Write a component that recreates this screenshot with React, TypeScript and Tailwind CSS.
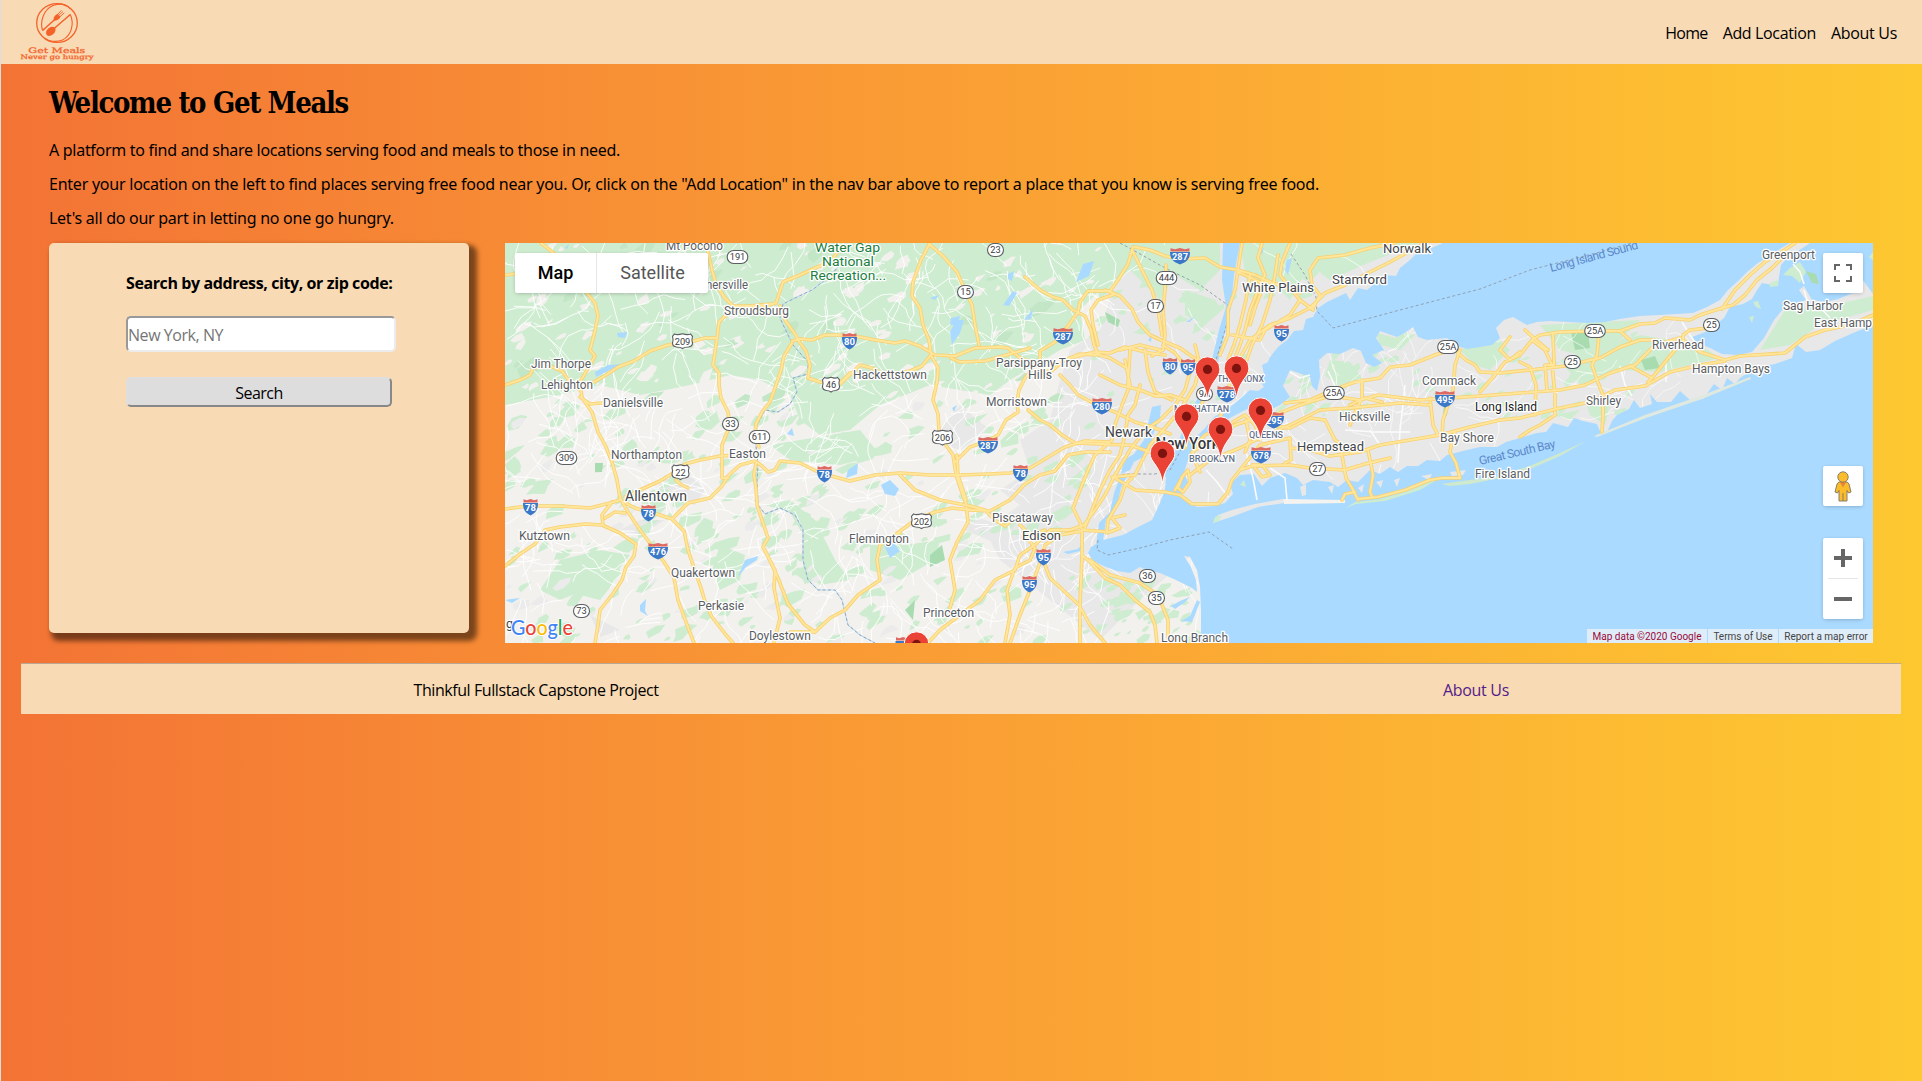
import React from "react";

type Pt = [number, number];

/* ---------- deterministic terrain texture ---------- */
function rng(seed: number) {
  let s = seed;
  return () => {
    s = (s * 1664525 + 1013904223) % 4294967296;
    return s / 4294967296;
  };
}

function minorRoads(seed: number, n: number, x0: number, y0: number, x1: number, y1: number): string {
  const r = rng(seed);
  let d = "";
  for (let i = 0; i < n; i++) {
    let x = x0 + r() * (x1 - x0);
    let y = y0 + r() * (y1 - y0);
    let a = r() * Math.PI * 2;
    d += `M${x.toFixed(1)} ${y.toFixed(1)}`;
    const k = 3 + Math.floor(r() * 5);
    for (let j = 0; j < k; j++) {
      a += (r() - 0.5) * 1.3;
      const l = 6 + r() * 9;
      x += Math.cos(a) * l;
      y += Math.sin(a) * l;
      d += `L${x.toFixed(1)} ${y.toFixed(1)}`;
    }
  }
  return d;
}

function patches(seed: number, n: number, x0: number, y0: number, x1: number, y1: number, size: number): string {
  const r = rng(seed);
  let d = "";
  for (let i = 0; i < n; i++) {
    const cx = x0 + r() * (x1 - x0);
    const cy = y0 + r() * (y1 - y0);
    const s = size * (0.35 + r());
    const k = 5 + Math.floor(r() * 4);
    for (let j = 0; j < k; j++) {
      const t = (j / k) * Math.PI * 2;
      const m = s * (0.4 + r() * 0.8);
      const u = Math.cos(t) * m * 1.5;
      const v = Math.sin(t) * m * 0.7;
      const x = cx + u * 0.87 + v * 0.5;
      const y = cy - u * 0.5 + v * 0.87;
      d += `${j ? "L" : "M"}${x.toFixed(1)} ${y.toFixed(1)}`;
    }
    d += "Z";
  }
  return d;
}

const OCEAN =
  "M1443 243L1427 250 1418 252 1410 260 1400 268 1396 276 1385 275 1367 290 1358 288 1350 300 1346 293 1327 302 1318 308 1313 317 1306 319 1303 330 1294 331 1287 340 1278 347 1270 357 1268 362 1262 365 1264 374 1257 377 1264 387 1258 391 1250 390 1240 399 1228 409 1214 417 1205 428 1195 438 1187 434 1180 441 1176 450 1166 458 1160 466 1166 478 1165 490 1160 503 1152 520 1138 527 1123 535 1103 540 1091 547 1088 553 1093 561 1106 567 1117 571 1130 573 1140 567 1150 571 1160 573 1176 580 1192 588 1197 592 1196 580 1191 567 1184 556 1190 557 1197 570 1200 587 1201 610 1201 643 1873 643 1873 243Z" +
  "M1195 443L1206 433 1228 419 1245 410 1262 405 1268 411 1280 405 1290 397 1283 386 1290 370 1310 377 1312 386 1317 391 1320 377 1319 360 1327 353 1340 354 1353 348 1361 351 1366 363 1374 367 1382 363 1372 355 1384 350 1376 338 1380 331 1397 337 1403 334 1413 327 1418 337 1427 340 1447 338 1457 346 1467 349 1480 347 1492 345 1500 338 1496 328 1504 320 1513 317 1527 325 1537 322 1550 321 1587 323 1605 322 1620 319 1640 316 1660 315 1693 313 1707 307 1720 300 1728 290 1738 281 1747 272 1758 263 1770 256 1780 249 1790 243 1810 243 1801 249 1788 257 1781 265 1779 277 1778 286 1762 283 1757 290 1752 299 1743 304 1730 307 1724 318 1708 331 1692 337 1697 343 1710 348 1722 354 1738 355 1752 352 1764 338 1774 320 1783 309 1800 302 1806 300 1799 290 1804 286 1812 300 1826 302 1838 299 1853 293 1862 279 1868 287 1873 294 1873 325 1853 333 1835 341 1820 350 1806 352 1796 344 1792 358 1775 364 1760 367 1757 376 1749 372 1740 378 1735 384 1727 378 1722 390 1714 384 1703 399 1690 400 1680 391 1671 402 1657 402 1650 394 1652 404 1640 408 1634 400 1629 409 1617 415 1612 421 1607 432 1600 431 1597 424 1583 421 1574 418 1568 427 1553 423 1546 432 1537 433 1520 438 1506 442 1497 447 1480 447 1467 450 1447 455 1440 461 1427 460 1418 466 1407 466 1398 472 1390 467 1380 474 1370 470 1358 482 1347 480 1338 487 1330 482 1313 480 1303 485 1297 478 1285 473 1270 478 1262 486 1254 474 1240 475 1230 484 1233 494 1225 503 1214 506 1197 507 1188 502 1180 497 1183 489 1188 482 1184 473 1187 463 1191 452Z";

const INLETS: string[] = [
  "M1223 243L1240 243 1234 275 1231 307 1222 345 1216 371 1204 398 1193 420 1187 440 1181 446 1179 440 1187 420 1199 395 1210 368 1219 330 1226 307 1222 280Z",
  "M1152 407L1161 405 1160 418 1154 432 1150 447 1143 457 1134 462 1130 470 1121 474 1124 460 1134 454 1144 440 1148 424Z",
  "M1121 474L1128 474 1121 488 1117 505 1106 520 1103 541 1096 545 1099 523 1110 512 1114 493Z",
  "M505 600L520 598 512 603Z",
  "M595 372L608 365 622 364 606 372 596 377Z",
  "M617 333L627 332 625 338 618 337Z",
  "M882 541L892 541 900 551 890 558Z",
  "M881 485L890 480 899 489 895 496 885 494Z",
  "M848 470L858 463 857 474 846 478Z",
  "M950 332L956 320 964 320 960 333 952 345Z",
  "M951 318L960 316 958 324 950 325Z",
  "M1076 282L1083 264 1094 261 1089 276Z",
  "M1003 305L1013 291 1017 293 1009 306Z",
  "M1008 274L1014 271 1012 281 1008 279Z",
  "M1024 320L1033 309 1031 319Z",
  "M930 298L939 295 935 300Z",
  "M738 577L745 560 758 556 757 560 746 567Z",
  "M640 605L646 599 645 611 648 616 640 611Z",
  "M787 434L792 428 794 436Z",
  "M565 248L569 244 567 249Z",
  "M1063 552L1078 549 1085 541 1080 551 1068 554Z",
  "M1171 606L1180 601 1190 597 1185 602 1175 609Z",
  "M1181 621L1190 616 1197 600 1200 602 1192 622Z",
  "M1287 260L1292 258 1288 275 1285 270Z",
  "M1258 253L1264 248 1262 254Z",
  "M1186 322L1195 316 1190 322Z",
  "M952 408L957 405 954 412Z",
  "M1148 340L1152 335 1151 342Z",
  "M1268 480L1280 478 1276 490 1266 492Z",
  "M1240 483L1252 480 1258 492 1244 496Z",
  "M1305 484L1315 482 1312 492Z",
];

const ISLANDS: { d: string; fill: string }[] = [
  { d: "M1213 523L1218 515 1232 510 1255 504 1283 499 1284 503 1258 507 1234 516Z", fill: "#e8e8e8" },
  { d: "M1213 523L1215 517 1222 515 1219 521Z", fill: "#ceecd0" },
  { d: "M1283 499L1345 500 1345 503 1284 504Z", fill: "#f5f3f0" },
  { d: "M1346 508L1355 502 1380 499 1405 492 1440 478 1420 490 1385 501 1356 504Z", fill: "#ceecd0" },
  { d: "M1441 484L1470 480 1500 476 1532 465 1560 453 1588 440 1593 437 1560 456 1530 469 1500 478 1470 484 1450 486Z", fill: "#cfe9cd" },
  { d: "M1594 436L1645 415 1700 396 1750 377 1751 379 1702 399 1646 418 1597 437Z", fill: "#dfe9e0" },
  { d: "M1783 275L1790 268 1800 262 1806 272 1800 283 1792 276Z", fill: "#ceecd0" },
  { d: "M1806 271L1816 274 1819 284 1812 283Z", fill: "#a8dcb0" },
  { d: "M1749 317L1754 316 1752 323Z", fill: "#ceecd0" },
  { d: "M1753 302L1758 301 1761 309 1756 307Z", fill: "#ceecd0" },
  { d: "M1770 283L1778 280 1778 286 1770 287Z", fill: "#ceecd0" },
  { d: "M1869 257L1873 252 1873 260Z", fill: "#ceecd0" },
  { d: "M1300 487L1306 484 1306 495 1302 496Z", fill: "#e8e8e8" },
  { d: "M1328 487L1334 485 1332 494Z", fill: "#e8e8e8" },
  { d: "M1358 488L1364 484 1362 493Z", fill: "#e8e8e8" },
  { d: "M1376 482L1383 480 1381 488Z", fill: "#e8e8e8" },
  { d: "M1394 480L1400 478 1397 487Z", fill: "#e8e8e8" },
  { d: "M1421 476L1432 474 1429 480Z", fill: "#e8e8e8" },
  { d: "M1450 472L1466 470 1463 475 1452 476Z", fill: "#e8e8e8" },
  { d: "M1240 485L1244 480 1246 487Z", fill: "#ceecd0" },
];

const HIGHWAYS: string[] = [
  "M541 243L556 255 568 272 583 288 595 303 598 316 594 335 590 350 595 356 587 370 580 382 582 398 592 412 598 432 606 447 612 462 617 480 620 498 628 512 640 530 652 546 664 562 674 578 678 600 686 622 694 643",
  "M505 275L515 274 525 278 540 280",
  "M505 385L520 380 530 375 533 368 548 365 562 371 570 382 580 390",
  "M594 382L606 375 618 367 634 361 650 351 668 345 690 342 705 338 717 338 719 322 725 316 740 307 770 304",
  "M580 397L590 404 602 403",
  "M706 243L712 270 716 284 724 297 733 306 765 306 776 303 783 282 800 275 815 268 830 262 840 249",
  "M780 306L785 320 795 334 800 343 806 351 810 365 808 378 820 382 840 383 850 373",
  "M717 338L715 352 713 365 719 373 719 385 721 398 728 412 730 425 722 445 722 465",
  "M792 341L800 339 812 340 825 335 838 335 860 337 875 340 895 343 905 341 920 346 935 355 955 356 975 348 1000 347 1008 348 1020 358 1035 363",
  "M792 343L784 356 781 370 775 388 770 402 762 412 756 424 755 436 759 447",
  "M840 384L853 372 860 365 872 368 885 375 910 371 922 366 930 356",
  "M930 243L921 260 913 282 912 296 920 308 923 325 929 340 931 355 938 368 937 382 933 400 938 414 939 430 945 444 953 455 956 475 961 490 966 504 968 522 957 542 950 560 955 590 950 608",
  "M929 244L943 256 957 272 965 290 972 305 975 325 979 345",
  "M951 358L960 362 985 361 1010 354 1030 348",
  "M1025 277L1040 290 1053 297 1063 300 1073 310 1085 316 1091 330 1094 345 1098 354",
  "M1133 247L1128 264 1118 280 1110 291 1088 291 1080 302 1078 312 1068 326 1055 342 1040 351 1040 362 1033 368 1025 378 1019 390 1017 402 1018 412 1006 420 998 435 985 442 970 447 955 462",
  "M1110 291L1115 294 1098 300 1091 310 1093 325 1098 345",
  "M1105 290L1120 296 1132 309 1138 322 1150 335 1163 341 1180 348 1200 362",
  "M1135 247L1150 250 1165 256 1180 259 1205 258 1220 267 1238 270 1255 275 1275 284 1295 290",
  "M1132 250L1142 270 1152 290 1158 310 1162 335",
  "M1166 265L1165 290 1163 310 1165 335 1163 350 1152 356",
  "M505 509L520 507 535 506 560 506 590 508 610 503 620 500 635 508 648 512 660 515 672 519 688 503 710 498 722 486 728 476 740 465 755 461 762 466 768 472 775 470 780 461 800 463 820 473 850 481 875 475 900 473 930 475 960 475 990 474 1010 473 1030 468 1045 459 1065 447 1085 441 1110 442",
  "M505 566L520 554 535 544 545 530 560 527 585 524 602 525 620 533 636 544 634 556 626 567 622 580 612 595 600 610 598 625 595 643",
  "M612 502L602 515 603 525M605 518L615 512 625 513",
  "M722 462L722 478 728 478M625 497L640 490 660 481 670 475 685 464 700 460 720 456 740 455",
  "M676 480L680 484 688 488",
  "M672 519L684 531 688 550 694 568 701 588 706 605 712 617 726 635 733 643",
  "M756 463L754 475 756 488 757 505 762 520 768 538 763 547 775 570 774 588 780 618 774 643",
  "M765 550L778 578 788 604 805 625 815 632",
  "M815 632L830 618 845 610 858 595 880 580 877 560 880 545 900 533",
  "M815 632L790 632",
  "M900 475L915 490 940 500 955 503 970 506 985 510 995 520 1005 526 1015 518",
  "M895 535L915 520 935 512 952 508 970 510 990 511 1010 500 1025 484 1040 475 1055 471 1068 455 1085 452 1110 452",
  "M957 455L958 475 966 500",
  "M1060 375L1070 385 1078 395 1095 404 1115 412 1135 422 1155 428 1170 434",
  "M1028 410L1040 420 1050 425 1062 435 1075 443 1100 444 1130 445 1150 452",
  "M1125 360L1130 385 1122 405 1115 425 1112 440 1095 455 1088 470 1080 490 1073 508 1080 522 1082 530",
  "M1140 385L1135 405 1128 415 1125 435 1120 455 1110 470 1100 490 1092 510 1084 530",
  "M1163 345L1175 353 1190 372 1185 390 1175 405 1160 420 1145 430 1130 450 1115 475 1105 495 1095 510 1084 525 1070 530 1050 530 1035 545 1020 555 1015 570 995 580 980 600 960 615 940 630 928 643",
  "M1100 375L1120 385 1140 390 1155 396 1170 395 1185 400M1096 354L1110 358 1125 367M1096 355L1080 354 1065 360 1050 372 1040 370",
  "M1195 345L1200 365 1195 385 1180 410 1165 428 1150 445 1135 475 1112 477",
  "M1115 478L1135 490 1165 492 1180 495 1192 504 1218 504 1228 492 1232 480 1240 470 1252 466 1290 465 1310 468 1345 470 1365 464 1390 458",
  "M1082 530L1082 555 1090 562 1105 578 1120 585 1135 600 1150 612 1155 625 1157 643",
  "M1082 555L1081 580 1080 605 1080 643",
  "M1090 560L1110 575 1140 583 1158 595 1168 620 1168 643",
  "M1080 607L1090 625 1105 643M1043 560L1050 578 1065 592 1080 606",
  "M1082 531L1060 535 1045 545 1041 560 1030 590 1020 615 1010 643",
  "M1025 535L1035 548 1030 560 1015 568 1007 590 1010 615 1005 643M1020 525L1030 535 1045 530",
  "M1082 530L1110 532 1120 528 1112 518 1125 515M1107 533L1108 520 1120 500 1125 485 1132 478",
  "M1240 358L1250 340 1270 325 1290 318 1310 308 1325 293 1345 285 1370 272 1390 262 1410 251 1425 243",
  "M1313 308L1320 295 1312 285 1310 270 1318 258 1345 255 1370 248 1395 243",
  "M1313 310L1300 300 1290 288 1280 275 1282 262 1290 243",
  "M1242 243L1238 270 1235 290 1228 310 1228 335 1220 355",
  "M1262 243L1258 258 1265 275 1258 290 1250 310 1245 330 1240 345 1235 358 1232 375 1225 400",
  "M1278 255L1275 275 1270 300 1262 325 1252 345 1245 365 1250 380",
  "M1250 275L1246 300 1240 325 1234 345 1228 360M1266 280L1256 305 1250 325",
  "M1238 272L1260 282 1283 284 1300 293M1232 335L1260 340 1265 330 1290 315 1300 300",
  "M1215 360L1210 385 1200 408 1190 430 1185 448",
  "M1222 412L1215 430 1205 435 1198 442 1192 455 1200 472",
  "M1192 452L1215 438 1235 425 1250 420 1275 415 1300 405 1330 396 1360 400 1378 395 1395 397 1420 400 1450 398 1480 396 1520 393 1560 390 1585 385 1610 373 1635 365 1655 345 1680 338",
  "M1190 475L1210 460 1240 448 1260 438 1290 425 1320 410 1350 408 1400 403 1430 405",
  "M1285 403L1310 400 1333 390 1355 382 1380 378 1390 367 1410 365 1435 355 1455 348",
  "M1270 425L1290 428 1310 418 1325 420 1335 440 1350 450",
  "M1240 470L1260 445 1290 438 1291 460 1285 463",
  "M1291 448L1310 450 1330 456 1360 452 1380 445 1410 440 1440 435 1470 427 1500 420 1520 418 1560 408 1590 402 1615 390 1645 386 1670 372 1700 365 1725 361",
  "M1341 450L1346 478 1352 488 1358 500M1368 450L1373 475 1370 492 1372 497",
  "M1342 500L1345 494 1355 492M1358 499L1378 497 1405 490 1430 480 1442 478 1460 478",
  "M1460 478L1456 463 1450 452 1452 440 1455 432",
  "M1233 422L1245 415 1255 425 1260 440M1246 420L1250 440 1245 452",
  "M1362 380L1362 398 1355 412 1350 425M1350 405L1365 398 1382 402",
  "M1460 350L1455 365 1453 390 1443 420 1442 438M1430 398L1433 425 1438 435",
  "M1455 350L1466 360 1475 365 1480 372 1500 373 1530 370 1565 366 1600 358 1620 347 1640 340 1655 340",
  "M1480 392L1495 375 1505 362 1520 355 1532 340 1540 335 1560 332 1595 331 1620 331 1640 324 1655 323 1665 318 1690 320 1700 315 1722 308 1733 305",
  "M1620 331L1630 340M1510 337L1500 350 1510 360 1520 352M1532 340L1545 350 1552 365 1555 395 1555 415 1540 425 1530 430 1520 437",
  "M1553 333L1554 365 1545 365 1547 390M1525 330L1536 340 1548 350M1520 362L1530 367 1536 385 1535 415",
  "M1599 335L1597 355 1592 365 1597 380 1603 395 1603 415 1602 432",
  "M1630 366L1652 378 1665 362 1675 350M1652 378L1648 382",
  "M1722 309L1735 290 1750 275 1765 262 1780 253 1795 243M1733 305L1745 295 1757 280 1772 268 1785 255",
  "M1683 340L1683 335 1690 330 1708 328M1683 340L1700 352 1725 360 1740 356 1755 355 1785 353 1795 345 1805 337 1825 330 1850 325 1873 315",
  "M1182 478L1175 490M1188 470L1182 477 1178 488 1183 492 1190 482Z",
  "M1252 465L1262 465 1270 475 1262 477 1255 468",
  "M1120 350L1140 345 1160 350M1130 350L1128 385M1145 350L1148 372 1155 392 1172 400",
  "M1075 357L1095 352 1110 353 1125 347 1150 353 1165 355",
];

const ROUTE_THIN: string[] = [
  "M1206 470L1217 482 1228 497M1246 452L1253 478 1257 500M1270 468L1285 478 1287 500",
  "M1682 322L1690 335 1697 345M1620 366L1625 385 1632 396M1666 360L1666 382",
  "M1793 264L1800 272 1804 284M1804 290L1808 303M1818 305L1830 318",
  "M1310 375L1300 378 1290 372M1328 371L1335 386",
  "M1405 385L1403 405 1400 430 1398 463M1370 430L1380 445M1345 430L1375 432 1410 432",
];

const BORDERS: string[] = [
  "M1291 254L1305 275 1316 297 1317 311 1333 328 1400 310 1480 289 1530 270 1600 252 1632 243",
  "M1120 243L1133 250 1165 268 1200 285 1229 306 1228 320 1216 360",
  "M1118 479L1124 474 1155 474 1170 470 1181 450",
  "M1098 540L1097 550 1108 555 1140 548 1170 540 1209 532 1233 549",
];
const DELAWARE =
  "M840 265L828 278 812 290 795 298 783 304 780 318 788 335 793 345 808 362 808 374 793 378 797 392 790 404 778 412 765 410 757 425 755 437 758 465 757 480 758 505 765 514 780 508 795 515 803 530 803 560 808 580 818 590 835 590 842 600 848 625 860 635 875 643";

type Label = [string, number, number, number, number, string];
const C1 = "#5a5d62";
const C2 = "#434649";
const LABELS: Label[] = [
  ["Mt Pocono", 666, 250, 57, 12, C1],
  ["nersville", 706, 289, 42, 12, C1],
  ["Stroudsburg", 724, 315, 65, 12, C1],
  ["Water Gap", 815, 252, 65, 13.5, "#1b7e40"],
  ["National", 822, 266, 52, 13.5, "#1b7e40"],
  ["Recreation...", 810, 280, 76, 13.5, "#1b7e40"],
  ["Jim Thorpe", 531, 368, 60, 12, C1],
  ["Lehighton", 541, 389, 52, 12, C1],
  ["Danielsville", 603, 407, 60, 12, C1],
  ["Northampton", 611, 459, 71, 12, C1],
  ["Easton", 729, 458, 37, 12, C1],
  ["Allentown", 625, 501, 62, 14, C2],
  ["Kutztown", 519, 540, 51, 12, C1],
  ["Quakertown", 671, 577, 64, 12, C1],
  ["Perkasie", 698, 610, 46, 12, C1],
  ["Doylestown", 749, 640, 62, 12, C1],
  ["g", 506, 628, 7, 13, C2],
  ["Hackettstown", 853, 379, 74, 12, C1],
  ["Parsippany-Troy", 996, 367, 86, 12, C1],
  ["Hills", 1028, 379, 24, 12, C1],
  ["Morristown", 986, 406, 61, 12, C1],
  ["Newark", 1105, 437, 47, 14, C2],
  ["Piscataway", 992, 522, 61, 12, C1],
  ["Edison", 1022, 540, 39, 13, C2],
  ["Flemington", 849, 543, 60, 12, C1],
  ["Princeton", 923, 617, 51, 12, C1],
  ["Long Branch", 1161, 642, 67, 12, C1],
  ["White Plains", 1242, 292, 72, 13, C2],
  ["Stamford", 1332, 283.5, 55, 13, C2],
  ["Norwalk", 1383, 252.5, 48, 13, C2],
  ["Hempstead", 1297, 450.5, 67, 13, C2],
  ["Hicksville", 1339, 420.5, 51, 12, C1],
  ["Commack", 1422, 384.5, 54, 12, C1],
  ["Long Island", 1475, 410.5, 62, 12, "#202124"],
  ["Bay Shore", 1440, 441.5, 54, 12, C1],
  ["Fire Island", 1475, 478, 55, 12, C1],
  ["Shirley", 1586, 404.5, 35, 12, C1],
  ["Riverhead", 1652, 348.5, 52, 12, C1],
  ["Hampton Bays", 1692, 372.5, 78, 12, C1],
  ["Greenport", 1762, 258.5, 53, 12, C1],
  ["Sag Harbor", 1783, 309.5, 60, 12, C1],
  ["East Hamp", 1814, 326.5, 58, 12, C1],
];
const BOROUGHS: [string, number, number, number][] = [
  ["THE BRONX", 1217, 382, 47],
  ["MANHATTAN", 1174, 412, 55],
  ["QUEENS", 1249, 438, 34],
  ["BROOKLYN", 1189, 462, 46],
];

type Shield = [string, number, number];
const INTERSTATES: Shield[] = [
  ["80", 849.5, 341], ["287", 1063, 336], ["280", 1102, 406], ["287", 988, 445], ["80", 1170, 366],
  ["95", 1188, 367], ["287", 1180, 256], ["78", 530.5, 507], ["78", 648.5, 513], ["78", 824.5, 474],
  ["476", 658, 551], ["78", 1020.5, 473], ["95", 1043.5, 557], ["95", 1029.5, 584], ["95", 1281.5, 333],
  ["278", 1227, 394], ["295", 1274, 420], ["678", 1261, 455], ["495", 1445, 399], ["", 903, 645],
];
const STATES: Shield[] = [
  ["191", 737.5, 257], ["33", 730.5, 424], ["611", 759.5, 437], ["309", 566.5, 458], ["73", 581.5, 611],
  ["23", 995.5, 250], ["15", 965.5, 292], ["444", 1166.5, 278], ["17", 1155.5, 306], ["36", 1147.5, 576],
  ["35", 1156.5, 598], ["9A", 1204.5, 394], ["27", 1317.5, 469], ["25A", 1334, 393], ["25A", 1448, 347],
  ["25A", 1595, 331], ["25", 1711.5, 325], ["25", 1572.5, 362],
];
const US_ROUTES: Shield[] = [
  ["209", 682.5, 341], ["46", 831, 384.5], ["22", 680.5, 472], ["206", 942.5, 437.5], ["202", 921.5, 521],
];
const MARKERS: Pt[] = [[1207.5, 398], [1236.5, 397], [1260.5, 439], [1186.5, 445], [1220.5, 458], [1162.5, 482], [916.5, 673]];

function Interstate({ s }: { s: Shield }) {
  const [t, x, y] = s;
  const w = t.length > 2 ? 10 : 7.5;
  return (
    <g transform={`translate(${x} ${y})`}>
      <path d={`M${-w} -4 C${-w} 3.2 ${-w * 0.65} 6 0 8.4 C${w * 0.65} 6 ${w} 3.2 ${w} -4Z`} fill="#3b78c8" />
      <path d={`M${-w + 0.5} -4.6 L${-w + 0.5} -7.8 L${-w * 0.5} -6.8 L0 -8 L${w * 0.5} -6.8 L${w - 0.5} -7.8 L${w - 0.5} -4.6Z`} fill="#dd6a62" />
      {t && <text y="4.1" textAnchor="middle" fontSize={t.length > 2 ? 9.2 : 9.6} fontWeight="700" fill="#fff">{t}</text>}
    </g>
  );
}
function StateRoute({ s }: { s: Shield }) {
  const [t, x, y] = s;
  const w = t.length > 2 ? 10.3 : 8;
  return (
    <g transform={`translate(${x} ${y})`}>
      <rect x={-w} y="-6.5" width={w * 2} height="13" rx="6.5" fill="#fff" stroke="#5b5e62" strokeWidth="1.1" />
      <text y="3.2" textAnchor="middle" fontSize="9.3" fill="#3c4043">{t}</text>
    </g>
  );
}
function USRoute({ s }: { s: Shield }) {
  const [t, x, y] = s;
  const w = t.length > 2 ? 10 : 8.5;
  return (
    <g transform={`translate(${x} ${y})`}>
      <path
        d={`M${-w + 2} -7 Q${-w * 0.5} -5.6 0 -7.2 Q${w * 0.5} -5.6 ${w - 2} -7 L${w} -4.6 Q${w - 1.2} -1 ${w} 2 Q${w} 5.5 ${w - 4} 6 Q2 6 0 7.5 Q-2 6 ${-w + 4} 6 Q${-w} 5.5 ${-w} 2 Q${-w + 1.2} -1 ${-w} -4.6Z`}
        fill="#fff" stroke="#5b5e62" strokeWidth="1.1"
      />
      <text y="3.6" textAnchor="middle" fontSize="9.3" fill="#3c4043">{t}</text>
    </g>
  );
}

function MapCanvas() {
  const hw = HIGHWAYS.join("");
  return (
    <svg className="block h-[400px] w-[1368px] font-['Roboto',sans-serif]" viewBox="505 243 1368 400">
      <rect x="505" y="243" width="1368" height="400" fill="#f2f1ee" />
      {/* built-up areas */}
      <path d="M1060 243L1450 243 1873 243 1873 480 1220 530 1140 600 1100 640 1050 600 1000 560 985 530 1020 505 1000 490 1030 470 1020 440 1050 420 1060 380 1070 350 1100 330 1110 300Z" fill="#e8e8e8" />
      <path d="M664 475L690 475 705 490 695 505 680 500 655 495ZM640 520L665 520 640 535 620 530ZM590 615L620 630 600 637ZM960 405L990 430 960 450 930 440ZM970 515L1000 525 1000 545 965 530Z" fill="#e8e8e8" />
      {/* woodland */}
      <path d="M505 243L1060 243 1120 243 1110 280 1080 310 1085 340 1060 350 1010 380 990 395 930 385 880 405 850 430 820 435 800 420 790 395 760 380 730 375 690 385 640 395 600 385 560 395 505 405Z" fill="#ceecd0" />
      <path d="M1085 243L1220 243 1220 270 1200 290 1175 275 1160 300 1130 270 1100 300ZM1240 243L1420 243 1370 262 1330 280 1310 265 1290 300 1270 280 1250 300ZM1185 290L1215 300 1222 310 1205 325 1185 315Z" fill="#ceecd0" />
      <path d="M765 505L790 512 803 535 803 570 820 585 850 580 835 560 815 520 790 500ZM560 560L600 550 630 555 610 580 560 600 540 590ZM870 545L905 545 940 540 935 560 900 580 870 570ZM770 445L860 430 880 455 840 465 790 460ZM720 545L745 555 740 580 720 590 712 570ZM590 570L620 575 600 600 580 595Z" fill="#ceecd0" />
      <path d="M1330 360L1350 362 1362 378 1340 385 1325 376ZM1376 333L1396 338 1405 332 1415 335 1400 350 1380 345ZM1460 350L1500 340 1510 350 1490 370 1475 365ZM1540 325L1640 320 1600 360 1560 350ZM1560 360L1640 335 1700 345 1720 358 1660 372 1620 370 1580 385ZM1785 310L1830 306 1873 296 1873 310 1820 325 1790 345 1760 350ZM1585 400L1610 405 1605 425 1590 415ZM1553 415L1580 410 1570 420Z" fill="#ceecd0" />
      <path d={patches(31, 130, 505, 243, 1100, 400, 6)} fill="#f2f1ee" />
      <path d={patches(5, 270, 505, 400, 1090, 643, 8)} fill="#ceecd0" />
      <path d={patches(77, 55, 505, 400, 1020, 643, 6)} fill="#ebebeb" />
      <path d={patches(12, 60, 1080, 243, 1330, 410, 6)} fill="#ceecd0" />
      <path d={patches(15, 45, 1100, 580, 1200, 643, 6)} fill="#ceecd0" />
      <path d={patches(19, 70, 1290, 330, 1640, 420, 5)} fill="#ceecd0" />
      <path d={patches(41, 30, 505, 243, 1080, 400, 9)} fill="#c3e7c6" />
      <path d="M1571 332L1588 333 1590 348 1575 350ZM1641 360L1655 356 1660 368 1645 370ZM930 555L942 545 945 560 930 567ZM905 610L915 600 913 620ZM1444 405L1448 405 1447 416 1443 414ZM1105 312L1120 320 1118 327 1108 322ZM595 463L603 463 602 472 595 472Z" fill="#a8dcb0" />
      {/* local roads */}
      <g fill="none" stroke="#fff" strokeLinejoin="round" strokeWidth="1">
        <path d={minorRoads(3, 280, 505, 243, 860, 643)} opacity="0.9" />
        <path d={minorRoads(9, 230, 850, 243, 1110, 643)} opacity="0.9" />
        <path d={minorRoads(21, 70, 1100, 243, 1460, 600)} opacity="0.75" />
        <path d={minorRoads(23, 50, 1300, 330, 1700, 420)} opacity="0.6" />
      </g>
      <path d={OCEAN} fill="#aadaff" fillRule="evenodd" />
      <path d={INLETS.join("")} fill="#aadaff" />
      {ISLANDS.map((i) => (
        <path key={i.d} d={i.d} fill={i.fill} />
      ))}
      <path d={ROUTE_THIN.join("")} fill="none" stroke="#fbfbfb" strokeWidth="1.6" />
      <path d={BORDERS.join("")} fill="none" stroke="#8f9aa6" strokeWidth="0.9" strokeDasharray="3 2.4" />
      <path d={DELAWARE} fill="none" stroke="#b9dcf5" strokeWidth="1.1" />
      <path d={DELAWARE} fill="none" stroke="#8f9aa6" strokeWidth="0.8" strokeDasharray="3 2.4" />
      <g fill="none" strokeLinejoin="round" strokeLinecap="round">
        <path d={hw} stroke="#f9d070" strokeWidth="3.6" />
        <path d={hw} stroke="#ffe69a" strokeWidth="1.9" />
      </g>
      {INTERSTATES.map((s, i) => <Interstate key={i} s={s} />)}
      {STATES.map((s, i) => <StateRoute key={i} s={s} />)}
      {US_ROUTES.map((s, i) => <USRoute key={i} s={s} />)}
      <g stroke="#fff" strokeWidth="2.6" strokeLinejoin="round" paintOrder="stroke">
        {LABELS.map(([t, x, y, w, size, fill]) => (
          <text key={t} x={x} y={y} fontSize={size} fill={fill} textLength={w} lengthAdjust="spacingAndGlyphs">{t}</text>
        ))}
        {BOROUGHS.map(([t, x, y, w]) => (
          <text key={t} x={x} y={y} fontSize="9.5" fontWeight="500" fill="#65728a" textLength={w} lengthAdjust="spacingAndGlyphs">{t}</text>
        ))}
        <text x="1155.5" y="448.5" fontSize="17" fontWeight="500" fill="#36383b" textLength="64" lengthAdjust="spacingAndGlyphs">New York</text>
      </g>
      <g fill="#5c88c9" fontSize="12">
        <text transform="translate(1551 272) rotate(-15)" textLength="91">Long Island Sound</text>
        <text transform="translate(1480 465) rotate(-13)" textLength="78">Great South Bay</text>
      </g>
      {MARKERS.map(([x, y]) => (
        <g key={x} transform={`translate(${x} ${y})`}>
          <path d="M0 1.5C-1.2 -7 -3.5 -12 -7 -17C-10 -21.300 -12.400 -24 -12.400 -28.800A12.400 12.400 0 0 1 12.400 -28.800C12.400 -24 10 -21.300 7 -17C3.500 -12 1.200 -7 0 1.500Z" fill="#ea4335" stroke="#fff" strokeWidth="1" />
          <circle cy="-28.6" r="4.6" fill="#7d130e" />
        </g>
      ))}
      <text x="511" y="635" fontSize="20.5" fontWeight="500" textLength="62" lengthAdjust="spacingAndGlyphs" stroke="#fff" strokeWidth="2" paintOrder="stroke" className="font-['Lato',sans-serif]">
        <tspan fill="#4285f4">G</tspan><tspan fill="#ea4335">o</tspan><tspan fill="#fbbc05">o</tspan><tspan fill="#4285f4">g</tspan><tspan fill="#34a853">l</tspan><tspan fill="#ea4335">e</tspan>
      </text>
    </svg>
  );
}

function Logo() {
  return (
    <svg className="block h-[62px] w-[74px]" viewBox="20 1 74 62" fill="none" stroke="#f4622a">
      <ellipse cx="57" cy="23" rx="20.3" ry="19.4" strokeWidth="1.3" />
      <path d="M42.6 30.5C39.5 21 44 9.5 53 5.6C60 3 66.5 4.5 70.5 9" strokeWidth="1.1" />
      <path d="M70.3 14.5C74.5 24 71.5 35.5 62.5 40C56 42.5 48.5 41.5 44.5 38" strokeWidth="1.1" />
      <path d="M42.6 30.5L54.5 19.8M70.3 14.5L53 29.5" strokeWidth="1.5" />
      <ellipse cx="50.8" cy="31.3" rx="5.4" ry="3.8" transform="rotate(-42 50.8 31.3)" fill="#f4622a" stroke="none" />
      <path d="M53.5 19.5C53.5 16.5 55.5 15 57.5 13.8L60.5 16.8C59.5 19 57 21 54.5 20.7Z" fill="#f4622a" stroke="none" />
      <path d="M57.5 14.5L61.5 10.3M58.7 15.4L63 11.5M60 16.7L64.4 12.8" strokeWidth="0.9" />
      <g fill="#f4622a" stroke="#f4622a" strokeWidth="0.25" className="font-['DejaVu_Serif',serif]">
        <text x="28.3" y="52.8" fontSize="7.6" textLength="57" lengthAdjust="spacingAndGlyphs">Get Meals</text>
        <text x="20.5" y="59" fontSize="6.3" textLength="73" lengthAdjust="spacingAndGlyphs">Never go hungry</text>
      </g>
    </svg>
  );
}

function Pegman() {
  return (
    <svg className="h-[31px] w-[18px]" viewBox="0 0 18 31">
      <path d="M4.8 11L13.2 11 15 13 17 21 14.5 22 13 19.5 13 30 5 30 5 19.5 3.5 22 1 21 3 13Z" fill="#fbbc2c" stroke="#7d7465" strokeWidth="0.9" strokeLinejoin="round" />
      <path d="M9 22L9 30" stroke="#7d7465" strokeWidth="0.9" />
      <path d="M5.8 11L12.2 11 9 16.5Z" fill="#e8833a" />
      <circle cx="9" cy="6" r="5.2" fill="#fbbc2c" stroke="#7d7465" strokeWidth="0.9" />
    </svg>
  );
}

export default function App() {
  return (
    <div className="h-[1081px] w-[1922px] overflow-hidden border-l border-[#dedede] bg-linear-to-r from-[#f37335] to-[#fdc830] font-['Open_Sans',sans-serif] text-base text-black">
      <header className="flex h-16 items-center justify-between bg-[#f8dab4] pr-[25px] pl-[19px]">
        <Logo />
        <nav className="flex gap-[15px] pt-0.5 leading-6">
          <a className="tracking-[-0.7px]">Home</a>
          <a className="tracking-[-0.36px]">Add Location</a>
          <a className="tracking-[-0.3px]">About Us</a>
        </nav>
      </header>

      <main className="pr-[49px] pl-12">
        <div className="h-[179px] pt-[19px] font-['Noto_Sans',sans-serif]">
          <h1 className="font-['DejaVu_Serif',serif] text-[29px] leading-10 font-bold font-stretch-condensed tracking-[-1.33px]">Welcome to Get Meals</h1>
          <div className="mt-[15px] flex flex-col gap-2.5 leading-6">
            <p className="tracking-[-0.29px]">A platform to find and share locations serving food and meals to those in need.</p>
            <p className="tracking-[-0.235px]">Enter your location on the left to find places serving free food near you. Or, click on the "Add Location" in the nav bar above to report a place that you know is serving free food.</p>
            <p className="tracking-[-0.27px]">Let's all do our part in letting no one go hungry.</p>
          </div>
        </div>

        <div className="flex gap-9">
          <form className="h-[390px] w-[420px] rounded-[5px] bg-[#f8dab4] pt-7 pl-[77px] shadow-[5px_5px_5px_3px_rgba(0,0,0,0.5)]" onSubmit={(e) => e.preventDefault()}>
            <label className="block leading-6 font-bold tracking-[-0.4px]" htmlFor="place">Search by address, city, or zip code:</label>
            <input id="place" placeholder="New York, NY" className="mt-[21px] block h-9 w-[270px] rounded-[5px] border-2 border-t-[#999] border-r-[#ececec] border-b-[#ececec] border-l-[#999] bg-white pt-0.5 tracking-[-0.45px] placeholder:text-[#757575]" />
            <button className="mt-[25px] block h-[30px] w-[266px] rounded-[5px] border-2 border-t-[#dedede] border-r-[#888] border-b-[#888] border-l-[#dedede] bg-[#ddd] pt-px leading-[26px] tracking-[-0.5px]">Search</button>
          </form>

          <section className="relative h-[400px] w-[1368px] overflow-hidden font-['Roboto',sans-serif]">
            <MapCanvas />
            <div className="absolute top-2.5 left-2.5 flex h-10 w-[193px] rounded-[2px] bg-white text-lg leading-10 shadow-[0_1px_4px_-1px_rgba(0,0,0,0.3)]">
              <button className="w-[82px] border-r border-[#e6e6e6] font-medium">Map</button>
              <button className="flex-1 text-[#565656]">Satellite</button>
            </div>
            <button className="absolute top-2.5 right-2.5 grid size-10 place-items-center rounded-[2px] bg-white shadow-[0_1px_4px_-1px_rgba(0,0,0,0.3)]">
              <svg className="size-[18px]" viewBox="0 0 18 18" fill="none" stroke="#666" strokeWidth="2">
                <path d="M1 6V1H6M12 1H17V6M17 12V17H12M6 17H1V12" />
              </svg>
            </button>
            <button className="absolute top-[223px] right-2.5 grid size-10 place-items-center rounded-[2px] bg-white shadow-[0_1px_4px_-1px_rgba(0,0,0,0.3)]">
              <Pegman />
            </button>
            <div className="absolute top-[295px] right-2.5 flex w-10 flex-col items-center rounded-[2px] bg-white shadow-[0_1px_4px_-1px_rgba(0,0,0,0.3)]">
              <button className="grid size-10 place-items-center">
                <svg className="size-[18px]" viewBox="0 0 18 18" fill="#666"><path d="M7 0H11V7H18V11H11V18H7V11H0V7H7Z" /></svg>
              </button>
              <div className="h-px w-[30px] bg-[#e6e6e6]" />
              <button className="grid size-10 place-items-center">
                <svg className="size-[18px]" viewBox="0 0 18 18" fill="#666"><path d="M0 7H18V11H0Z" /></svg>
              </button>
            </div>
            <div className="absolute right-0 bottom-0 flex h-3.5 gap-px text-[10px] leading-[15px] text-[#444]">
              <span className="w-[120px] bg-[#f5f5f5]/70 text-center text-[#9b0a38]">Map data ©2020 Google</span>
              <span className="w-[70px] bg-[#f5f5f5]/70 text-center">Terms of Use</span>
              <span className="w-[94px] bg-[#f5f5f5]/70 text-center">Report a map error</span>
            </div>
          </section>
        </div>
      </main>

      <footer className="mt-5 mr-[21px] ml-5 flex h-[51px] items-center border-t border-[#b9a793] bg-[#f8dab4] pt-px leading-6">
        <p className="w-[1030px] text-center tracking-[-0.42px]">Thinkful Fullstack Capstone Project</p>
        <a className="flex-1 text-center tracking-[-0.3px] text-[#551a8b]">About Us</a>
      </footer>
    </div>
  );
}
